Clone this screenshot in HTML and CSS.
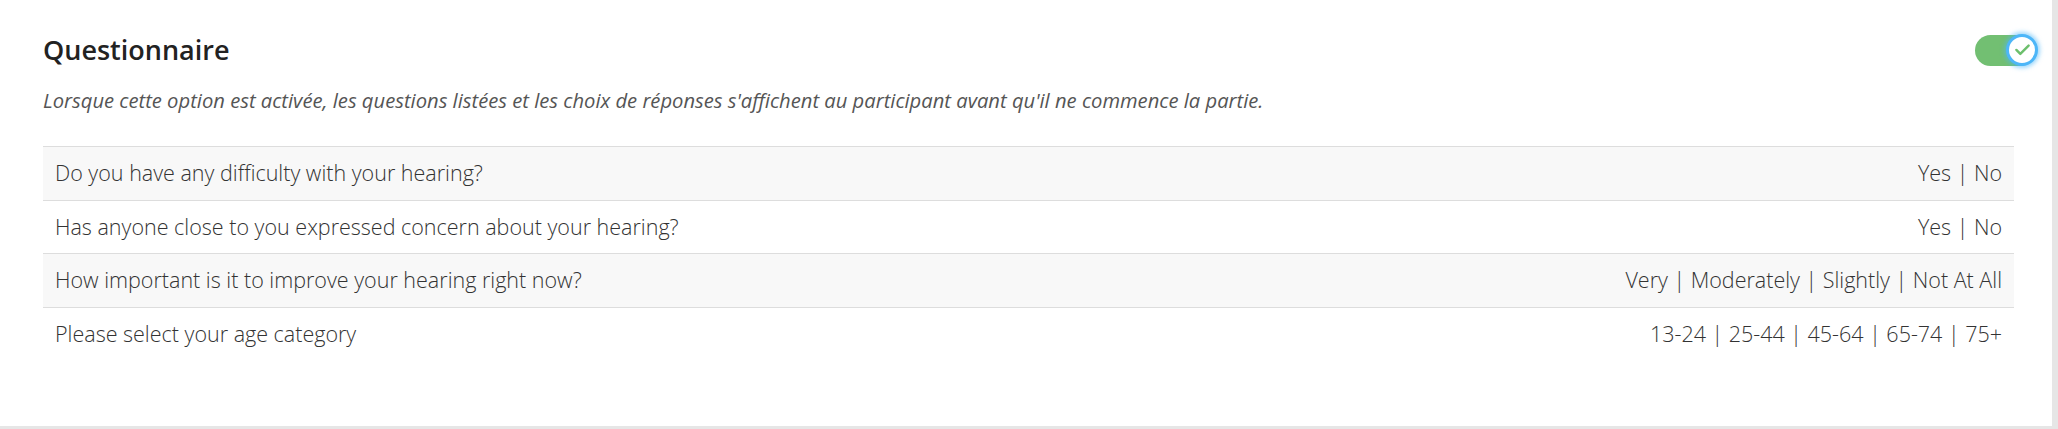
FILE: index.html
```html
<!DOCTYPE html>
<html lang="fr">
<head>
  <meta charset="UTF-8" />
  <meta name="viewport" content="width=device-width, initial-scale=1" />
  <title>Questionnaire</title>
  <link rel="stylesheet" href="styles.css">
</head>
<body>
  <div class="card">
    <div class="card-header">
      <h2 class="card-title">Questionnaire</h2>
      <div class="switch on">
        <div class="switch-knob">
          <svg viewBox="0 0 24 24" width="21" height="21">
            <path d="M5 12.5l4.5 4.5L19 7.5" fill="none" stroke="#6cbf6c" stroke-width="2.8" stroke-linecap="round" stroke-linejoin="round"/>
          </svg>
        </div>
      </div>
    </div>
    <p class="card-desc">Lorsque cette option est activée, les questions listées et les choix de réponses s'affichent au participant avant qu'il ne commence la partie.</p>

    <table class="q-table">
      <tr>
        <td>Do you have any difficulty with your hearing?</td>
        <td class="answers">Yes | No</td>
      </tr>
      <tr>
        <td>Has anyone close to you expressed concern about your hearing?</td>
        <td class="answers">Yes | No</td>
      </tr>
      <tr>
        <td>How important is it to improve your hearing right now?</td>
        <td class="answers">Very | Moderately | Slightly | Not At All</td>
      </tr>
      <tr>
        <td>Please select your age category</td>
        <td class="answers">13-24 | 25-44 | 45-64 | 65-74 | 75+</td>
      </tr>
    </table>
  </div>
</body>
</html>
```

FILE: styles.css
```css
* { box-sizing: border-box; }
body {
  margin: 0;
  font-family: 'Open Sans', 'Noto Sans', sans-serif;
  background: #e6e6e6;
}
.card {
  width: calc(100% - 6px);
  height: 426px;
  background: #fff;
  padding: 34px 38px 0 43px;
}
.card-header {
  display: flex;
  align-items: center;
  justify-content: space-between;
  margin-right: -21px;
}
.card-title {
  margin: 0;
  font-size: 27px;
  line-height: 32px;
  font-weight: 600;
  color: #222;
}
.card-desc {
  margin: 21px 0 32px;
  font-size: 20.2px;
  line-height: 27px;
  font-style: italic;
  color: #555;
}
.switch {
  position: relative;
  width: 60px;
  height: 31px;
  border-radius: 16px;
  background: #72bf72;
}
.switch-knob {
  position: absolute;
  top: -1px;
  right: -3px;
  width: 32px;
  height: 32px;
  border-radius: 50%;
  background: #fff;
  border: 3px solid #4db6f8;
  box-shadow: 0 0 4px 2px rgba(77,182,248,0.55);
  display: flex;
  align-items: center;
  justify-content: center;
}
.q-table {
  width: 100%;
  border-collapse: collapse;
  font-size: 21.5px;
  font-weight: 300;
  color: #333;
}
.q-table td {
  padding: 12px 12px;
  line-height: 28.5px;
  border-top: 1px solid #dddddd;
}
.q-table tr:nth-child(odd) { background: #f8f8f8; }
.q-table td.answers { text-align: right; white-space: nowrap; }
```
